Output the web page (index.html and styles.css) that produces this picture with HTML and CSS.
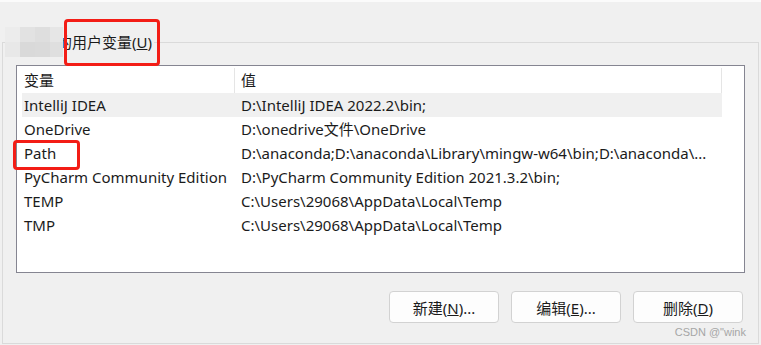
FILE: index.html
```html
<!DOCTYPE html>
<html lang="zh">
<head>
<meta charset="utf-8">
<title>用户变量</title>
<link rel="stylesheet" href="styles.css">
</head>
<body>
<div class="page">
  <div class="top-strip"></div>
  <fieldset class="group">
    <legend class="group-title">的用户变量(<u>U</u>)</legend>
    <div class="listbox">
      <div class="table">
        <div class="row head">
          <div class="cell var">变量</div>
          <div class="cell val">值</div>
        </div>
        <div class="row sel">
          <div class="cell var">IntelliJ IDEA</div>
          <div class="cell val">D:\IntelliJ IDEA 2022.2\bin;</div>
        </div>
        <div class="row">
          <div class="cell var">OneDrive</div>
          <div class="cell val">D:\onedrive文件\OneDrive</div>
        </div>
        <div class="row">
          <div class="cell var">Path</div>
          <div class="cell val">D:\anaconda;D:\anaconda\Library\mingw-w64\bin;D:\anaconda\...</div>
        </div>
        <div class="row">
          <div class="cell var">PyCharm Community Edition</div>
          <div class="cell val">D:\PyCharm Community Edition 2021.3.2\bin;</div>
        </div>
        <div class="row">
          <div class="cell var">TEMP</div>
          <div class="cell val">C:\Users\29068\AppData\Local\Temp</div>
        </div>
        <div class="row">
          <div class="cell var">TMP</div>
          <div class="cell val">C:\Users\29068\AppData\Local\Temp</div>
        </div>
      </div>
    </div>
    <div class="buttons">
      <button class="btn">新建(<u>N</u>)...</button>
      <button class="btn">编辑(<u>E</u>)...</button>
      <button class="btn">删除(<u>D</u>)</button>
    </div>
  </fieldset>

  <div class="mosaic">
    <span class="m1"></span><span class="m2"></span><span class="m3"></span><span class="m4"></span>
    <span class="m5"></span><span class="m6"></span><span class="m7"></span><span class="m8"></span>
  </div>
  <div class="mark mark-title"></div>
  <div class="mark mark-path"></div>
  <div class="watermark">CSDN @"wink</div>
</div>
</body>
</html>
```

FILE: styles.css
```css
* { box-sizing: border-box; }
html, body { margin: 0; padding: 0; }
body {
  background: #f0f0f0;
  font-family: "Noto Sans", "Noto Sans CJK SC", sans-serif;
  font-size: 15px;
  color: #1b1b1b;
}
.page {
  position: relative;
  width: 761px;
  height: 345px;
  overflow: hidden;
}
.top-strip {
  height: 2px;
  background: #fbfbfb;
}
.group {
  margin: 30px 2px 0 2px;
  height: 312px;
  border: 1px solid #dadada;
  padding: 13px 13px 0 13px;
  min-width: 0;
}
.group-title {
  margin-left: 39px;
  padding: 0 2px;
  line-height: 20px;
  height: 20px;
  color: #1b1b1b;
}
.listbox {
  height: 208px;
  background: #fff;
  border: 1px solid #858591;
  padding-left: 5px;
}
.table {
  width: 700px;
}
.row {
  display: flex;
  height: 24px;
  line-height: 24px;
  white-space: nowrap;
}
.row.head {
  height: 27px;
  line-height: 27px;
  padding-top: 2px;
  line-height: 25px;
}
.row.head .cell.var { border-right: 1px solid #e5e5e5; }
.row.head .cell.val { border-right: 1px solid #e5e5e5; }
.row.sel { background: #f0f0f0; }
.cell { overflow: hidden; }
.cell.var {
  width: 213px;
  padding-left: 2px;
}
.cell.val {
  flex: 1;
  padding-left: 6px;
}
.buttons {
  display: flex;
  justify-content: flex-end;
  gap: 12px;
  margin-top: 18px;
  padding-right: 2px;
}
.btn {
  width: 110px;
  height: 32px;
  background: #fdfdfd;
  border: 1px solid #d2d2d2;
  border-radius: 4px;
  font: inherit;
  color: #1b1b1b;
  padding: 0;
}
.mosaic {
  position: absolute;
  left: 5px;
  top: 27px;
  width: 58px;
  height: 30px;
  display: grid;
  grid-template-columns: 15px 15px 15px 13px;
  grid-template-rows: 15px 15px;
}
.m1 { background: #ececec; }
.m2 { background: #e2e2e2; }
.m3 { background: #dedede; }
.m4 { background: #e6e6e6; }
.m5 { background: #e8e8e8; }
.m6 { background: #d9d9d9; }
.m7 { background: #dadada; }
.m8 { background: #dfdfdf; }
.mark {
  position: absolute;
  border: 3px solid #f31d16;
  border-radius: 4px;
}
.mark-title { left: 64px; top: 19px; width: 96px; height: 47px; }
.mark-path { left: 13px; top: 140px; width: 67px; height: 30px; }
.watermark {
  position: absolute;
  right: 15px;
  top: 325px;
  font-family: "Liberation Sans", Arial, sans-serif;
  font-size: 11px;
  color: #a6a6a6;
  line-height: 14px;
}
```
